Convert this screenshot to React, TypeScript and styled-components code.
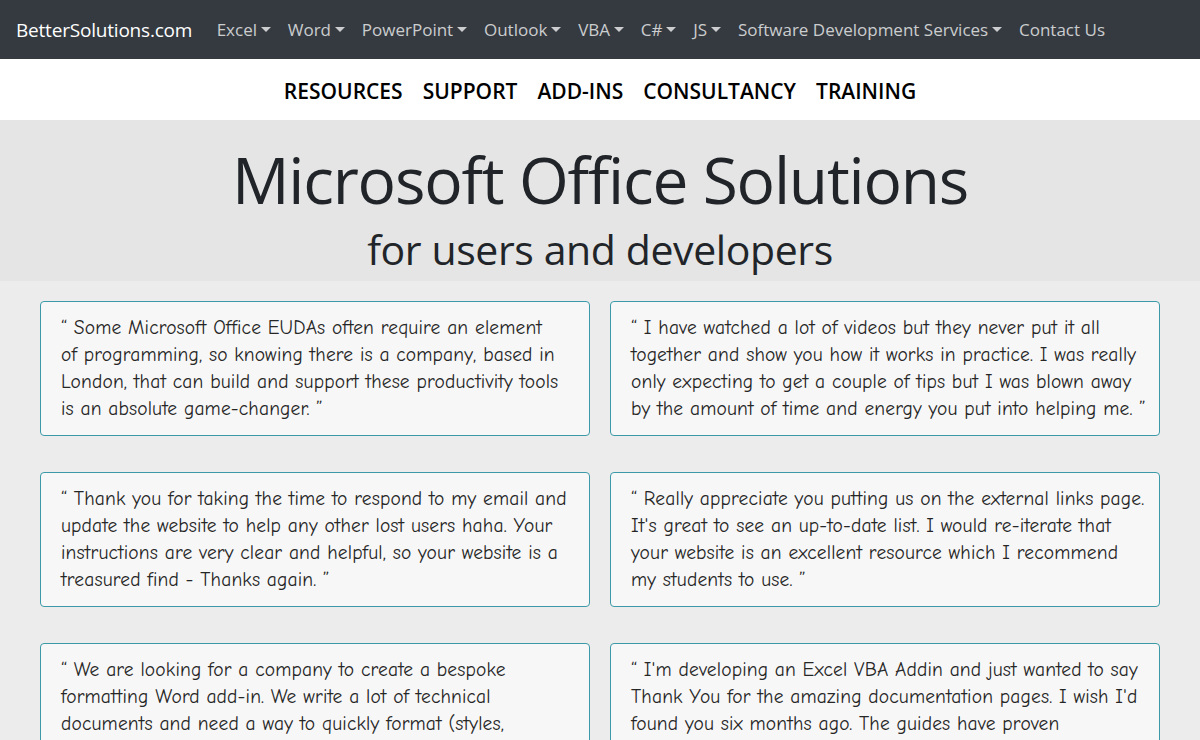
import React from "react";
import styled, { createGlobalStyle } from "styled-components";

const Global = createGlobalStyle`
  html, body { margin: 0; padding: 0; }
  body {
    background: #ececec;
    font-family: "Open Sans", "Noto Sans", sans-serif;
    color: #212529;
  }
  * { box-sizing: border-box; }
`;

const Navbar = styled.nav`
  height: 59px;
  background: #343a40;
  display: flex;
  align-items: center;
  padding: 0 16px;
`;

const Brand = styled.a`
  color: #fff;
  font-size: 19px;
  margin-right: 16px;
  text-decoration: none;
  letter-spacing: -0.2px;
`;

const NavList = styled.div`
  display: flex;
  align-items: center;
`;

const NavLink = styled.a<{ $caret?: boolean }>`
  color: rgba(255, 255, 255, 0.75);
  font-size: 17px;
  padding: 0 8.4px;
  text-decoration: none;
  display: flex;
  align-items: center;
  &::after {
    content: "";
    display: ${(p) => (p.$caret ? "inline-block" : "none")};
    margin-left: 4px;
    border-top: 5px solid rgba(255, 255, 255, 0.75);
    border-left: 5px solid transparent;
    border-right: 5px solid transparent;
  }
`;

const SubBar = styled.div`
  height: 61px;
  background: #fff;
  display: flex;
  justify-content: center;
  align-items: center;
  gap: 20px;
  padding-top: 3px;
`;

const SubLink = styled.a`
  color: #000;
  font-size: 21px;
  font-weight: 600;
  text-decoration: none;
`;

const Hero = styled.header`
  background: #e5e5e5;
  height: 161px;
  display: flex;
  flex-direction: column;
  align-items: center;
  padding-top: 21px;
`;

const Title = styled.h1`
  margin: 0;
  font-size: 64px;
  font-weight: 400;
  line-height: 78px;
  letter-spacing: -1.2px;
  color: #212529;
`;

const Subtitle = styled.h2`
  margin: 0;
  font-size: 41px;
  font-weight: 500;
  line-height: 60px;
  letter-spacing: -0.4px;
  color: #212529;
`;

const Grid = styled.main`
  display: grid;
  grid-template-columns: 550px 550px;
  column-gap: 20px;
  row-gap: 36px;
  padding: 20px 40px;
`;

const Card = styled.blockquote`
  margin: 0;
  min-height: 135px;
  background: #f7f7f7;
  border: 1px solid #3c9aa8;
  border-radius: 4px;
  padding: 12px 12px 13px 20px;
  font-family: "Comic Sans MS", "Comic Neue", "Lato", sans-serif;
  font-size: 19.5px;
  letter-spacing: 0.15px;
  line-height: 27px;
  color: #262626;
  overflow: hidden;
`;

const Line = styled.span`
  display: block;
  white-space: nowrap;
`;

const navItems: { label: string; caret: boolean }[] = [
  { label: "Excel", caret: true },
  { label: "Word", caret: true },
  { label: "PowerPoint", caret: true },
  { label: "Outlook", caret: true },
  { label: "VBA", caret: true },
  { label: "C#", caret: true },
  { label: "JS", caret: true },
  { label: "Software Development Services", caret: true },
  { label: "Contact Us", caret: false },
];

const subItems = ["RESOURCES", "SUPPORT", "ADD-INS", "CONSULTANCY", "TRAINING"];

const quotes: string[][] = [
  [
    "“ Some Microsoft Office EUDAs often require an element",
    "of programming, so knowing there is a company, based in",
    "London, that can build and support these productivity tools",
    "is an absolute game-changer. ”",
  ],
  [
    "“ I have watched a lot of videos but they never put it all",
    "together and show you how it works in practice. I was really",
    "only expecting to get a couple of tips but I was blown away",
    "by the amount of time and energy you put into helping me. ”",
  ],
  [
    "“ Thank you for taking the time to respond to my email and",
    "update the website to help any other lost users haha. Your",
    "instructions are very clear and helpful, so your website is a",
    "treasured find - Thanks again. ”",
  ],
  [
    "“ Really appreciate you putting us on the external links page.",
    "It's great to see an up-to-date list. I would re-iterate that",
    "your website is an excellent resource which I recommend",
    "my students to use. ”",
  ],
  [
    "“ We are looking for a company to create a bespoke",
    "formatting Word add-in. We write a lot of technical",
    "documents and need a way to quickly format (styles,",
    "numbering, tables) them consistently. ”",
  ],
  [
    "“ I'm developing an Excel VBA Addin and just wanted to say",
    "Thank You for the amazing documentation pages. I wish I'd",
    "found you six months ago. The guides have proven",
    "invaluable. ”",
  ],
];

export default function App() {
  return (
    <>
      <Global />
      <Navbar>
        <Brand href="#">BetterSolutions.com</Brand>
        <NavList>
          {navItems.map((n) => (
            <NavLink key={n.label} href="#" $caret={n.caret}>
              {n.label}
            </NavLink>
          ))}
        </NavList>
      </Navbar>
      <SubBar>
        {subItems.map((s) => (
          <SubLink key={s} href="#">
            {s}
          </SubLink>
        ))}
      </SubBar>
      <Hero>
        <Title>Microsoft Office Solutions</Title>
        <Subtitle>for users and developers</Subtitle>
      </Hero>
      <Grid>
        {quotes.map((lines, i) => (
          <Card key={i}>
            {lines.map((l, j) => (
              <Line key={j}>{l}</Line>
            ))}
          </Card>
        ))}
      </Grid>
    </>
  );
}
